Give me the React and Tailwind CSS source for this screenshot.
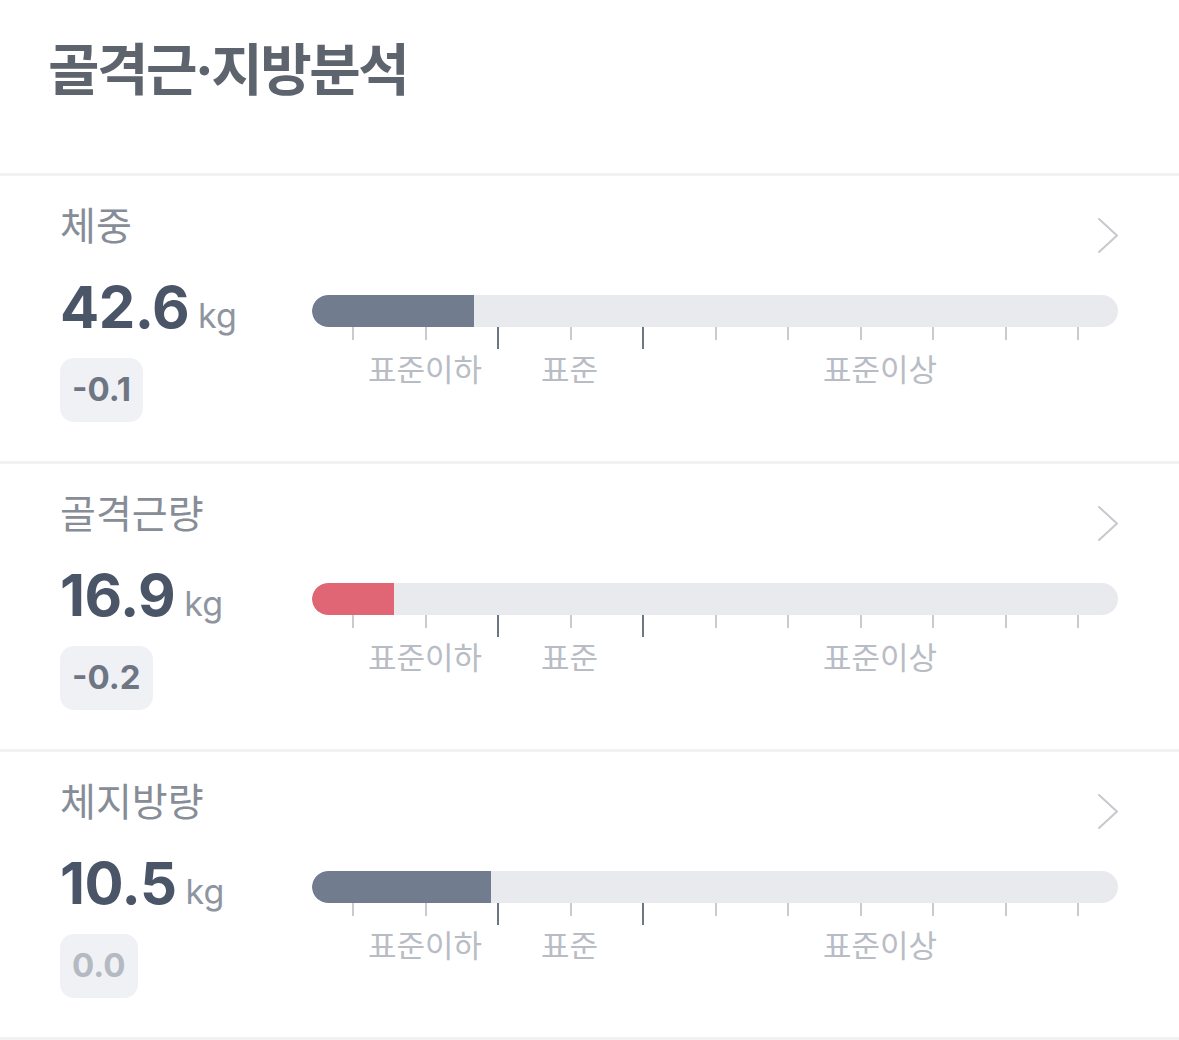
const rows = [
  { label: "체중", value: "42.6", diff: "-0.1", fill: 162, color: "bg-[#717c8e]", muted: false },
  { label: "골격근량", value: "16.9", diff: "-0.2", fill: 82, color: "bg-[#e06676]", muted: false },
  { label: "체지방량", value: "10.5", diff: "0.0", fill: 179, color: "bg-[#717c8e]", muted: true },
];

// 11 ticks under the bar, the 3rd and 5th mark the "표준" range
const ticks = [0, 1, 2, 3, 4, 5, 6, 7, 8, 9, 10];

function Chevron() {
  return (
    <svg width="22" height="37" viewBox="0 0 22 37" className="mt-[13px] mr-[-1px]">
      <polyline
        points="2,2 20,18.5 2,35"
        fill="none"
        stroke="#c7c8cd"
        strokeWidth="2"
        strokeLinecap="round"
        strokeLinejoin="round"
      />
    </svg>
  );
}

function Scale({ fill, color }) {
  return (
    <div className="flex-1 pt-[16px]">
      <div className="h-[32px] w-full rounded-full bg-[#e9eaee] overflow-hidden">
        <div className={`h-full rounded-l-full ${color}`} style={{ width: fill }} />
      </div>
      <div className="flex items-start justify-between pl-[40px] pr-[39px]">
        {ticks.map((t) =>
          t === 2 || t === 4 ? (
            <div key={t} className="w-[2px] h-[22px] bg-[#6f7683]" />
          ) : (
            <div key={t} className="w-[2px] h-[13px] bg-[#c9cbd0]" />
          )
        )}
      </div>
      <div className="flex text-[31px] leading-[34px] text-[#b8bcc4] mt-[4px]">
        <div className="w-[41px]" />
        <div className="w-[144px] text-center">표준이하</div>
        <div className="w-[145px] text-center">표준</div>
        <div className="flex-1 text-center">표준이상</div>
      </div>
    </div>
  );
}

function MetricRow({ row }) {
  return (
    <div className="border-b-[3px] border-[#f2f2f4] pl-[60px] pr-[61px] pt-[28px] pb-[39px]">
      <div className="flex items-start justify-between">
        <span className="text-[39px] leading-[44px] text-[#878d97]">{row.label}</span>
        <Chevron />
      </div>
      <div className="flex mt-[25px]">
        <div className="w-[252px]">
          <div className="flex items-baseline h-[56px]">
            <span className="text-[58px] leading-[56px] font-bold tracking-[-0.5px] text-[#4b5568]">
              {row.value}
            </span>
            <span className="ml-[9px] text-[34px] text-[#8e95a0]">kg</span>
          </div>
          <div className="mt-[23px] inline-flex items-center h-[64px] px-[12px] rounded-[14px] bg-[#f0f1f5]">
            <span
              className={`text-[33px] font-bold ${row.muted ? "text-[#b4b9c2]" : "text-[#6e7583]"}`}
            >
              {row.diff}
            </span>
          </div>
        </div>
        <Scale fill={row.fill} color={row.color} />
      </div>
    </div>
  );
}

export default function App() {
  return (
    <div className="w-[1179px] h-[1040px] bg-white overflow-hidden font-['Inter','Noto_Sans_CJK_KR',sans-serif]">
      <div className="h-[176px] border-b-[3px] border-[#f2f2f4] pl-[48px] pt-[38px]">
        <h1 className="text-[56px] leading-[64px] font-bold tracking-[-2.5px] text-[#5e646e]">
          골격근·지방분석
        </h1>
      </div>
      {rows.map((row) => (
        <MetricRow key={row.label} row={row} />
      ))}
    </div>
  );
}
